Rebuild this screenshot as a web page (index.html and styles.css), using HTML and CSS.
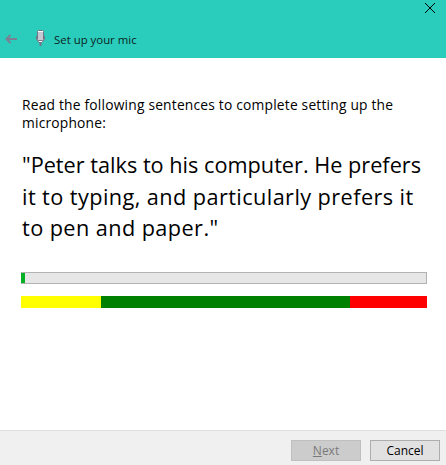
FILE: index.html
```html
<!DOCTYPE html>
<html lang="en">
<head>
    <meta charset="UTF-8">
    <meta name="viewport" content="width=device-width, initial-scale=1.0">
    <title>Set up your mic</title>
    <link rel="stylesheet" href="styles.css">
</head>
<body>
    <header class="titlebar">
        <div class="close-row">
            <svg class="close-icon" width="10" height="10" viewBox="0 0 10 10" aria-hidden="true">
                <path d="M0 0L10 10M10 0L0 10" stroke="#000" stroke-width="1" fill="none"/>
            </svg>
        </div>
        <div class="title-row">
            <svg class="back-icon" width="12" height="10" viewBox="0 0 12 10" aria-hidden="true">
                <path d="M12 5H1.5M5.5 1L1.5 5L5.5 9" stroke="#7d7f92" stroke-width="2" fill="none"/>
            </svg>
            <svg class="mic-icon" width="9" height="16" viewBox="0 0 9 16" aria-hidden="true">
                <path d="M0.5 6V9L3 12.5H6L8.5 9V6" stroke="#6f7488" stroke-width="1" fill="#fff"/>
                <rect x="1.5" y="0.5" width="6" height="10" rx="1" fill="#fff" stroke="#6f7488" stroke-width="1"/>
                <path d="M2 3H7M2 5H7M2 7H7M2 9H7" stroke="#8e93a3" stroke-width="1"/>
                <path d="M4.5 12.5V16" stroke="#6f7488" stroke-width="2"/>
            </svg>
            <span class="title-text">Set up your mic</span>
        </div>
    </header>

    <main class="content">
        <p class="intro">Read the following sentences to complete setting up the<br>microphone:</p>
        <p class="sentence">"Peter talks to his computer. He prefers<br><span class="sentence-rest">it to typing, and particularly prefers it<br>to pen and paper."</span></p>

        <div class="progress">
            <div class="progress-fill"></div>
        </div>

        <div class="levels">
            <div class="level-low"></div>
            <div class="level-good"></div>
            <div class="level-high"></div>
        </div>
    </main>

    <footer class="footer">
        <button class="button" disabled><u>N</u>ext</button>
        <button class="button">Cancel</button>
    </footer>
</body>
</html>
```

FILE: styles.css
```css
html, body {
    height: 100%;
}
body {
    font-family: "Open Sans", "Noto Sans", Arial, sans-serif;
    background-color: #fff;
    color: #000;
    margin: 0;
    display: flex;
    flex-direction: column;
    overflow: hidden;
}

.titlebar {
    background-color: #2accbc;
    height: 58px;
    flex-shrink: 0;
}
.close-row {
    display: flex;
    justify-content: flex-end;
    height: 32px;
    padding: 3px 11px 0 0;
    box-sizing: border-box;
}
.close-icon {
    display: block;
}
.title-row {
    display: flex;
    align-items: center;
    height: 14px;
    padding-left: 5px;
}
.back-icon {
    margin-right: 19px;
}
.mic-icon {
    margin-right: 9px;
    margin-bottom: 2px;
}
.title-text {
    font-size: 11.4px;
    color: #0a2422;
}

.content {
    flex: 1;
    padding: 38px 19px 0 21px;
}
.intro {
    margin: 0 0 0 1px;
    font-size: 13.8px;
    letter-spacing: 0.2px;
    line-height: 18px;
    white-space: nowrap;
}
.sentence {
    margin: 17px 0 0 1px;
    font-size: 21.7px;
    line-height: 31.5px;
    height: 95px;
    white-space: nowrap;
}
.sentence-rest {
    letter-spacing: 0.42px;
}

.progress {
    margin-top: 28px;
    height: 12px;
    box-sizing: border-box;
    background-color: #e6e6e6;
    border: 1px solid #b2b2b2;
    border-left: none;
}
.progress-fill {
    width: 4px;
    height: 100%;
    background-color: #06b025;
}

.levels {
    margin-top: 12px;
    height: 12px;
    display: flex;
}
.level-low {
    width: 80px;
    background-color: #ff0;
}
.level-good {
    width: 249px;
    background-color: #008000;
}
.level-high {
    flex: 1;
    background-color: #f00;
}

.footer {
    height: 35px;
    flex-shrink: 0;
    background-color: #f0f0f0;
    border-top: 1px solid #dfdfdf;
    display: flex;
    justify-content: flex-end;
    gap: 9px;
    padding: 9px 6px 0 0;
    box-sizing: border-box;
}
.button {
    width: 70px;
    height: 21px;
    padding: 0;
    font-family: inherit;
    font-size: 12px;
    color: #000;
    background-color: #e1e1e1;
    border: 1px solid #adadad;
}
.button:disabled {
    background-color: #ccc;
    border-color: #bfbfbf;
    color: #7a7a7a;
}
```
